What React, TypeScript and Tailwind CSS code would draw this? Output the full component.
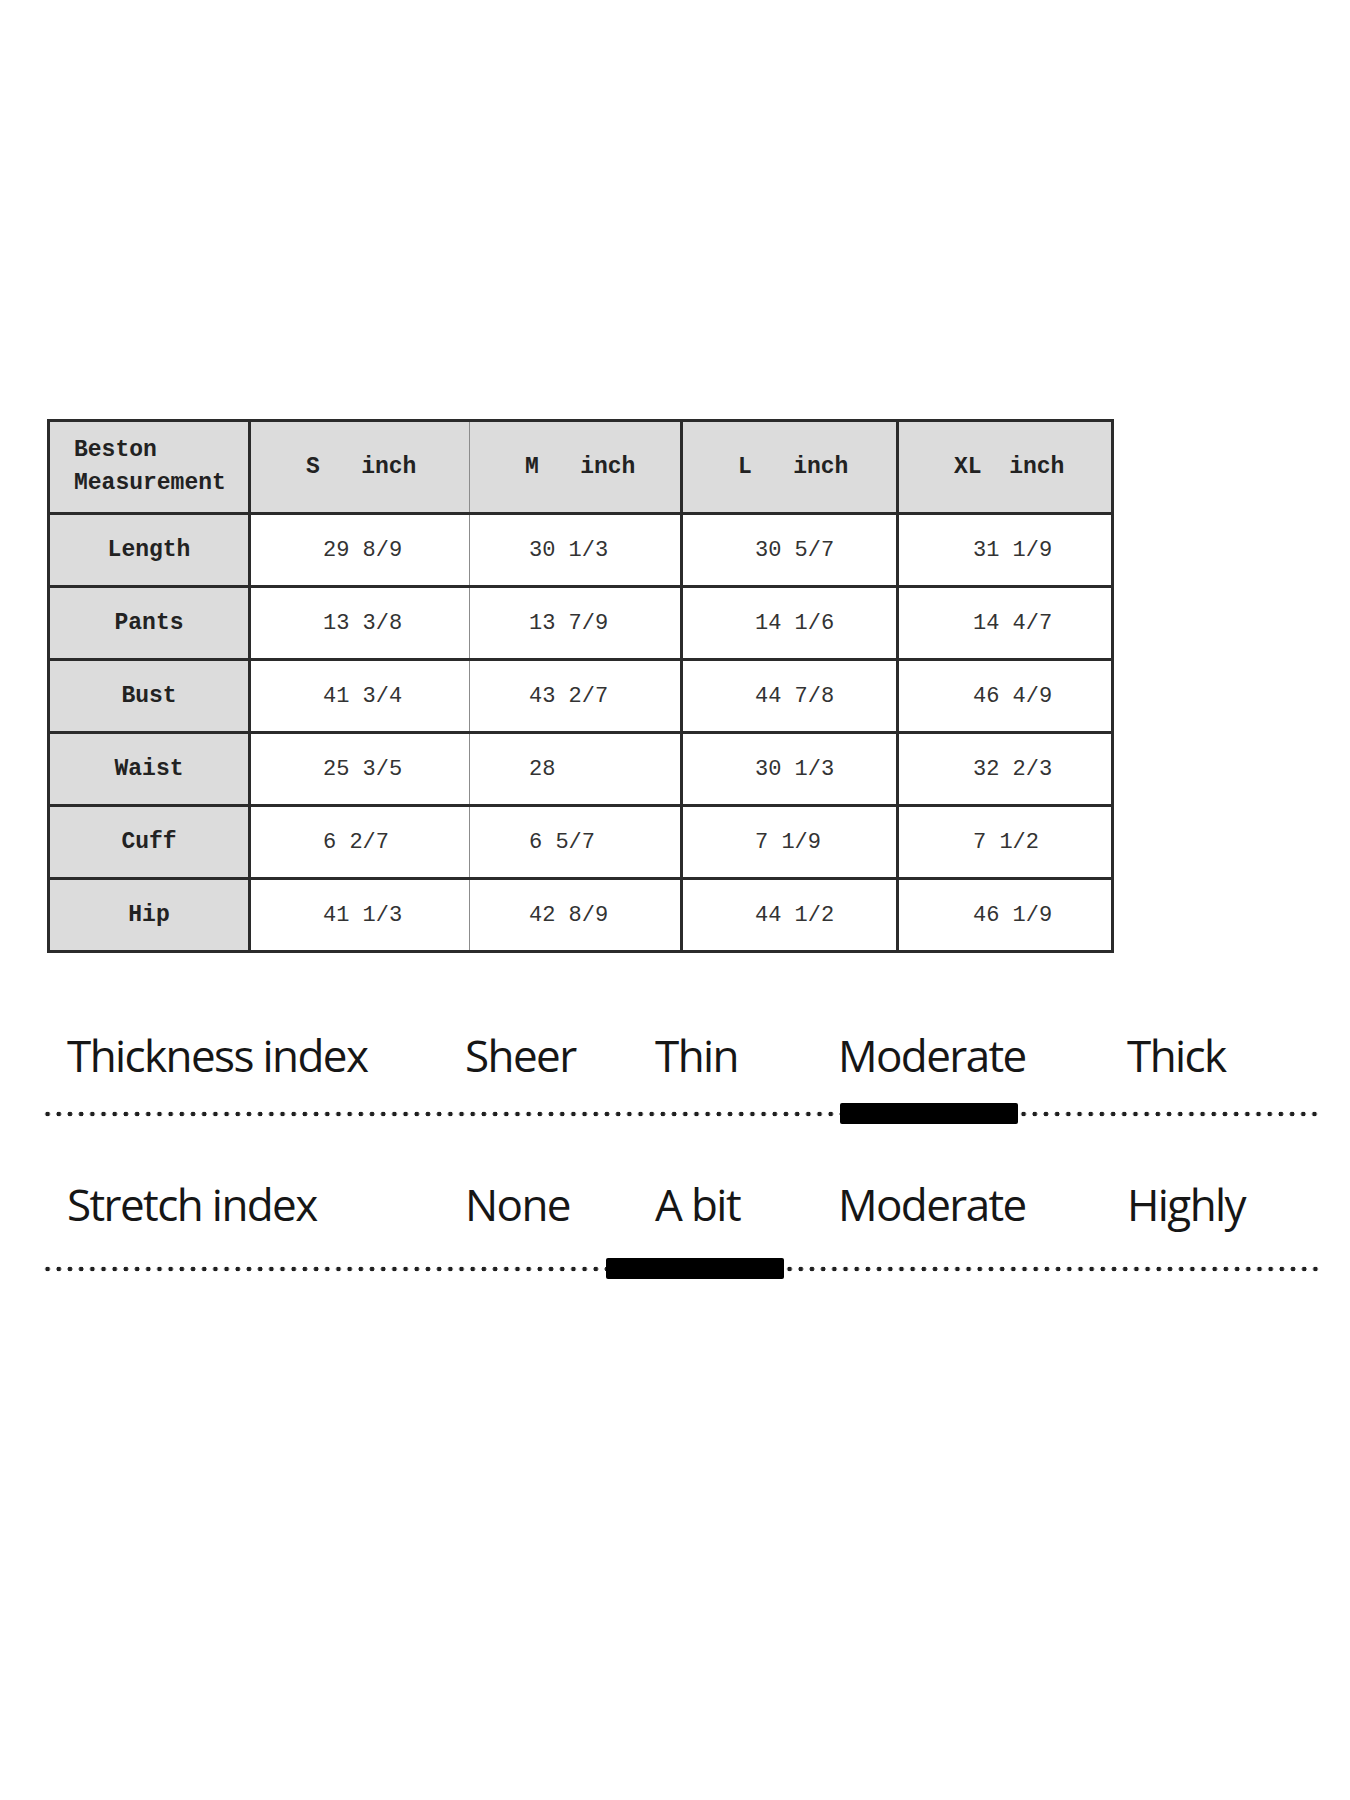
const headers = [
  { label: 'S   inch', w: 'w-[220px]' },
  { label: 'M   inch', w: 'w-[212px]' },
  { label: 'L   inch', w: 'w-[216px]' },
  { label: 'XL  inch', w: 'w-[215px]' },
]

const rows = [
  { name: 'Length', values: ['29 8/9', '30 1/3', '30 5/7', '31 1/9'] },
  { name: 'Pants', values: ['13 3/8', '13 7/9', '14 1/6', '14 4/7'] },
  { name: 'Bust', values: ['41 3/4', '43 2/7', '44 7/8', '46 4/9'] },
  { name: 'Waist', values: ['25 3/5', '28', '30 1/3', '32 2/3'] },
  { name: 'Cuff', values: ['6 2/7', '6 5/7', '7 1/9', '7 1/2'] },
  { name: 'Hip', values: ['41 1/3', '42 8/9', '44 1/2', '46 1/9'] },
]

// per-column left padding and side borders (S|M divider is a thin grey line)
const cellSides = [
  'pl-[72px] border-l-[3px] border-r-[1px] border-l-[#2b2b2b] border-r-[#8c8c8c]',
  'pl-[59px] border-l-[1px] border-r-[3px] border-l-[#8c8c8c] border-r-[#2b2b2b]',
  'pl-[72px] border-x-[3px] border-[#2b2b2b]',
  'pl-[74px] border-x-[3px] border-[#2b2b2b]',
]

const headSides = [
  'border-l-[3px] border-r-[1px] border-l-[#2b2b2b] border-r-[#8c8c8c]',
  'border-l-[1px] border-r-[3px] border-l-[#8c8c8c] border-r-[#2b2b2b]',
  'border-x-[3px] border-[#2b2b2b]',
  'border-x-[3px] border-[#2b2b2b]',
]

const dotted =
  'h-[8px] bg-[radial-gradient(circle,#1f1f1f_2.1px,transparent_2.6px)] bg-[length:11.2px_8px] bg-repeat-x bg-left'

const IndexRow = ({
  title,
  options,
  lead,
  gap,
}: {
  title: string
  options: string[]
  lead: string
  gap: string
}) => (
  <div>
    <div className="flex items-start pl-[25px] text-[44px] leading-none tracking-[-1.6px] text-[#161616]">
      <div className="w-[398px]">{title}</div>
      <div className="w-[190px]">{options[0]}</div>
      <div className="w-[183px]">{options[1]}</div>
      <div className="w-[289px]">{options[2]}</div>
      <div>{options[3]}</div>
    </div>
    <div className={`flex items-center ${gap}`}>
      <div className={`${lead} ${dotted}`} />
      <div className="w-[178px] h-[21px] bg-black rounded-[2px]" />
      <div className={`flex-1 ${dotted}`} />
    </div>
  </div>
)

export default function App() {
  return (
    <div className="min-h-[1800px] w-[1350px] bg-white pt-[419px]">
      <table
        className="ml-[47px] border-collapse"
        style={{ fontFamily: '"Liberation Mono", "DejaVu Sans Mono", monospace' }}
      >
        <thead>
          <tr className="h-[93px] bg-[#dcdcdc]">
            <th className="w-[201px] border-[3px] border-[#2b2b2b] pl-[24px] text-left align-middle text-[23px] font-bold leading-[33px] text-[#222]">
              Beston
              <br />
              Measurement
            </th>
            {headers.map((h, i) => (
              <th
                key={h.label}
                className={`${h.w} ${headSides[i]} border-y-[3px] border-y-[#2b2b2b] pl-[55px] text-left align-middle text-[23px] font-bold whitespace-pre text-[#222]`}
              >
                {h.label}
              </th>
            ))}
          </tr>
        </thead>
        <tbody>
          {rows.map((r) => (
            <tr key={r.name} className="h-[73px]">
              <td className="border-[3px] border-[#2b2b2b] bg-[#dcdcdc] text-center align-middle text-[23px] font-bold text-[#222]">
                {r.name}
              </td>
              {r.values.map((v, i) => (
                <td
                  key={i}
                  className={`${cellSides[i]} border-y-[3px] border-y-[#2b2b2b] bg-white text-left align-middle text-[22px] text-[#333] whitespace-pre`}
                >
                  {v}
                </td>
              ))}
            </tr>
          ))}
        </tbody>
      </table>

      <div
        className="ml-[42px] w-[1279px] mt-[80px] flex flex-col gap-[58px]"
        style={{ fontFamily: '"Open Sans", "Noto Sans", sans-serif' }}
      >
        <IndexRow
          title="Thickness index"
          options={['Sheer', 'Thin', 'Moderate', 'Thick']}
          lead="w-[798px]"
          gap="mt-[26px]"
        />
        <IndexRow
          title="Stretch index"
          options={['None', 'A bit', 'Moderate', 'Highly']}
          lead="w-[564px]"
          gap="mt-[32px]"
        />
      </div>
    </div>
  )
}
